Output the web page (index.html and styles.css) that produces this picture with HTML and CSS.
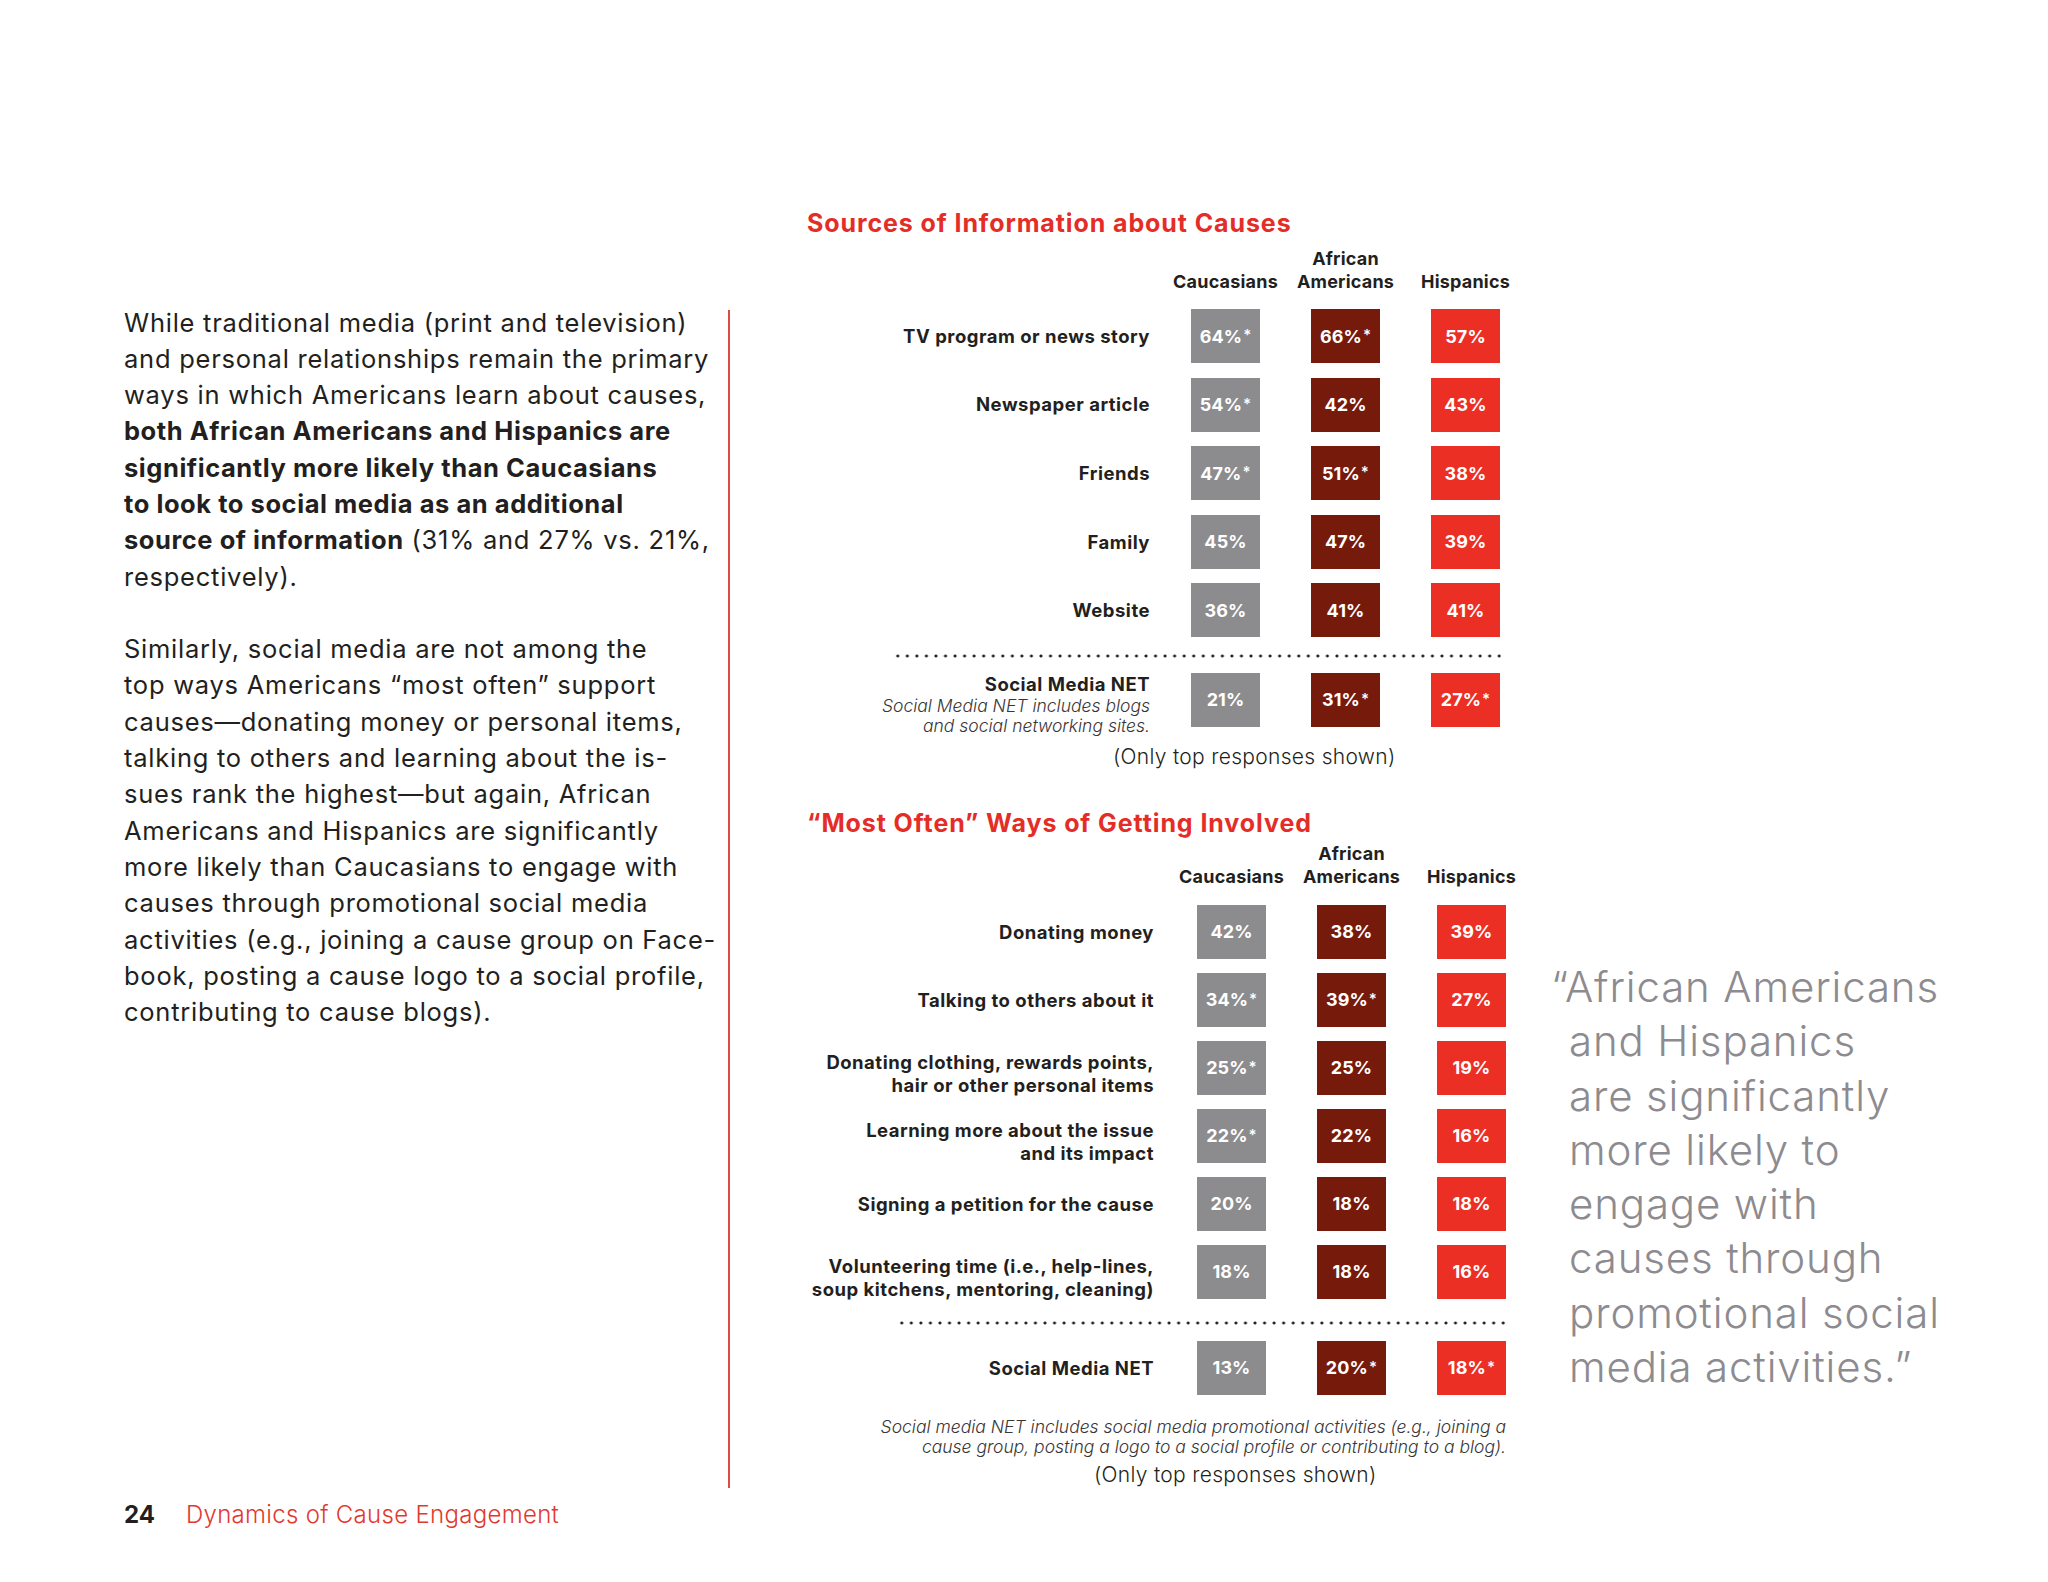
FILE: index.html
```html
<!DOCTYPE html>
<html lang="en">
<head>
<meta charset="utf-8">
<title>Dynamics of Cause Engagement</title>
<link rel="stylesheet" href="styles.css">
</head>
<body>
<div class="page">
  <div class="main">
    <div class="left">
      <div class="body-text">
        <p>While traditional media (print and television)<br>and personal relationships remain the primary<br>ways in which Americans learn about causes,<br><b>both African Americans and Hispanics are<br>significantly more likely than Caucasians<br>to look to social media as an additional<br>source of information</b> (31% and 27% vs. 21%,<br>respectively).</p>
        <p>Similarly, social media are not among the<br>top ways Americans “most often” support<br>causes—donating money or personal items,<br>talking to others and learning about the is-<br>sues rank the highest—but again, African<br>Americans and Hispanics are significantly<br>more likely than Caucasians to engage with<br>causes through promotional social media<br>activities (e.g., joining a cause group on Face-<br>book, posting a cause logo to a social profile,<br>contributing to cause blogs).</p>
      </div>
    </div>

    <div class="charts">
      <section class="chart one">
        <h2 class="chart-title">Sources of Information about Causes</h2>
        <div class="row head">
          <div class="label"></div>
          <div class="cells">
            <div class="hc">Caucasians</div>
            <div class="hc">African<br>Americans</div>
            <div class="hc">Hispanics</div>
          </div>
        </div>
        <div class="rows">
          <div class="row"><div class="label">TV program or news story</div><div class="cells"><div class="box c">64%<span class="star">*</span></div><div class="box a">66%<span class="star">*</span></div><div class="box h">57%</div></div></div>
          <div class="row"><div class="label">Newspaper article</div><div class="cells"><div class="box c">54%<span class="star">*</span></div><div class="box a">42%</div><div class="box h">43%</div></div></div>
          <div class="row"><div class="label">Friends</div><div class="cells"><div class="box c">47%<span class="star">*</span></div><div class="box a">51%<span class="star">*</span></div><div class="box h">38%</div></div></div>
          <div class="row"><div class="label">Family</div><div class="cells"><div class="box c">45%</div><div class="box a">47%</div><div class="box h">39%</div></div></div>
          <div class="row"><div class="label">Website</div><div class="cells"><div class="box c">36%</div><div class="box a">41%</div><div class="box h">41%</div></div></div>
        </div>
        <div class="sep"></div>
        <div class="row social">
          <div class="label net-block">
            <div class="net">Social Media NET</div>
            <div class="note">Social Media NET includes blogs<br>and social networking sites.</div>
          </div>
          <div class="cells"><div class="box c">21%</div><div class="box a">31%<span class="star">*</span></div><div class="box h">27%<span class="star">*</span></div></div>
        </div>
        <div class="caption">(Only top responses shown)</div>
      </section>

      <section class="chart two">
        <h2 class="chart-title">“Most Often” Ways of Getting Involved</h2>
        <div class="row head">
          <div class="label"></div>
          <div class="cells">
            <div class="hc">Caucasians</div>
            <div class="hc">African<br>Americans</div>
            <div class="hc">Hispanics</div>
          </div>
        </div>
        <div class="rows">
          <div class="row"><div class="label">Donating money</div><div class="cells"><div class="box c">42%</div><div class="box a">38%</div><div class="box h">39%</div></div></div>
          <div class="row"><div class="label">Talking to others about it</div><div class="cells"><div class="box c">34%<span class="star">*</span></div><div class="box a">39%<span class="star">*</span></div><div class="box h">27%</div></div></div>
          <div class="row"><div class="label dbl">Donating clothing, rewards points,<br>hair or other personal items</div><div class="cells"><div class="box c">25%<span class="star">*</span></div><div class="box a">25%</div><div class="box h">19%</div></div></div>
          <div class="row"><div class="label dbl">Learning more about the issue<br>and its impact</div><div class="cells"><div class="box c">22%<span class="star">*</span></div><div class="box a">22%</div><div class="box h">16%</div></div></div>
          <div class="row"><div class="label">Signing a petition for the cause</div><div class="cells"><div class="box c">20%</div><div class="box a">18%</div><div class="box h">18%</div></div></div>
          <div class="row"><div class="label dbl">Volunteering time (i.e., help-lines,<br>soup kitchens, mentoring, cleaning)</div><div class="cells"><div class="box c">18%</div><div class="box a">18%</div><div class="box h">16%</div></div></div>
        </div>
        <div class="sep"></div>
        <div class="row social">
          <div class="label">Social Media NET</div>
          <div class="cells"><div class="box c">13%</div><div class="box a">20%<span class="star">*</span></div><div class="box h">18%<span class="star">*</span></div></div>
        </div>
        <div class="foot-note">Social media NET includes social media promotional activities (e.g., joining a<br>cause group, posting a logo to a social profile or contributing to a blog).</div>
        <div class="caption">(Only top responses shown)</div>
      </section>
    </div>

    <blockquote class="quote">“African Americans<br>and Hispanics<br>are significantly<br>more likely to<br>engage with<br>causes through<br>promotional social<br>media activities.”</blockquote>
  </div>

  <footer class="footer">
    <span class="pg">24</span>
    <span class="pub">Dynamics of Cause Engagement</span>
  </footer>
</div>
</body>
</html>
```
FILE: styles.css
```css
* { box-sizing: border-box; }
html, body { margin: 0; padding: 0; background: #ffffff; }
body { font-family: Inter, "Open Sans", sans-serif; color: #231f20; }

.page { width: 2048px; height: 1582px; padding-left: 124px; overflow: hidden; }
.main { display: flex; align-items: flex-start; height: 1490px; }

/* left column */
.left { flex: none; width: 606px; height: 1178px; margin-top: 310px; border-right: 2px solid #dc4b44; }
.body-text { margin-top: -5.5px; font-size: 25.5px; line-height: 36.3px; letter-spacing: 0.75px; white-space: nowrap; }
.body-text p { margin: 0 0 36.3px; }
.body-text b { font-weight: 700; letter-spacing: 0.55px; }

/* charts */
.charts { flex: none; width: 708px; margin-left: 77px; margin-top: 208px; }
.chart { --lw: 343px; --g1: 41px; --sepl: 86px; --sepw: 608px; --rg: 14.6px; }
.chart.two { --lw: 347px; --g1: 43px; --sepl: 90px; --sepw: 610px; --rg: 14px; margin-top: 38px; }
.chart-title { margin: 0; font-size: 25px; line-height: 30px; font-weight: 700; color: #e52d27; letter-spacing: 0.9px; white-space: nowrap; }

.row { display: flex; align-items: center; }
.rows .row { height: 54px; }
.label { flex: none; width: var(--lw); text-align: right; font-size: 18.5px; font-weight: 700; line-height: 22.5px; letter-spacing: 0.5px; white-space: nowrap; }
.label.dbl { padding-top: 12px; }
.cells { display: flex; gap: 51px; margin-left: var(--g1); }

.head { margin-top: 8.5px; }
.chart.two .head { margin-top: 4.5px; }
.hc { width: 69px; height: 46px; display: flex; flex-direction: column; justify-content: flex-end; align-items: center; font-size: 18px; font-weight: 700; line-height: 23px; letter-spacing: 0.2px; white-space: nowrap; text-align: center; }

.rows { display: flex; flex-direction: column; gap: var(--rg); margin-top: 16.5px; }
.box { flex: none; width: 69px; height: 54px; display: flex; align-items: center; justify-content: center; color: #ffffff; font-size: 18px; font-weight: 700; letter-spacing: 0.1px; }
.box .star { font-size: 15px; font-weight: 600; margin-left: 1px; margin-bottom: 3px; }
.c { background: #8c8c8e; }
.a { background: #761a0c; }
.h { background: #ec2f25; }

.sep { height: 4px; width: var(--sepw); margin-left: var(--sepl); margin-top: 16.5px;
  background: radial-gradient(circle, #231f20 1.2px, rgba(35,31,32,0) 1.8px) 0 0 / 9.55px 4px repeat-x; }
.chart.two .sep { margin-top: 22px; }

.social { margin-top: 15px; align-items: flex-start; }
.chart.two .social { margin-top: 16px; height: 54px; align-items: center; }
.net-block { margin-top: -1px; }
.net { line-height: 24px; }
.note { font-size: 17.5px; line-height: 20px; font-weight: 300; font-style: italic; letter-spacing: 0; color: #3a3637; }

.caption { font-size: 21px; line-height: 26px; font-weight: 300; letter-spacing: 0.3px; white-space: nowrap; margin-top: 8px; margin-left: 306px; }
.chart.two .caption { margin-top: 5px; margin-left: 287px; }

.foot-note { width: 699px; margin-top: 22px; text-align: right; font-size: 17.5px; line-height: 20px; font-weight: 300; font-style: italic; color: #3a3637; white-space: nowrap; }

/* quote */
.quote { flex: none; margin: 960px 0 0 54px; font-size: 42px; line-height: 54.3px; font-weight: 300; letter-spacing: 0.85px; color: #8d8b8f; text-indent: -18px; white-space: nowrap; }

/* footer */
.footer { display: flex; align-items: center; gap: 31px; height: 30px; margin-top: 10px; font-size: 24px; line-height: 30px; }
.pg { font-weight: 700; }
.pub { font-weight: 300; color: #e2392f; letter-spacing: 0.3px; }
```
